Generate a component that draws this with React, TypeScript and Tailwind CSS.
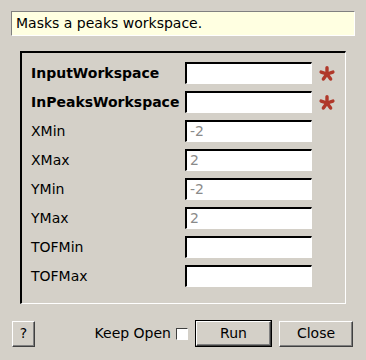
import React from 'react'

type Field = {
  name: string
  value?: string
  required?: boolean
}

const fields: Field[] = [
  { name: 'InputWorkspace', required: true },
  { name: 'InPeaksWorkspace', required: true },
  { name: 'XMin', value: '-2' },
  { name: 'XMax', value: '2' },
  { name: 'YMin', value: '-2' },
  { name: 'YMax', value: '2' },
  { name: 'TOFMin' },
  { name: 'TOFMax' },
]

// red five-armed "required" marker
function RequiredStar() {
  const arms = [-90, -18, 54, 126, 198]
  return (
    <svg width="18" height="18" viewBox="0 0 18 18" className="ml-[6px]">
      {arms.map((a) => {
        const r = (a * Math.PI) / 180
        return (
          <line
            key={a}
            x1="9"
            y1="10"
            x2={9 + 6.2 * Math.cos(r)}
            y2={10 + 6.2 * Math.sin(r)}
            stroke="#b0382a"
            strokeWidth="3.4"
            strokeLinecap="round"
          />
        )
      })}
    </svg>
  )
}

function Row({ field }: { field: Field }) {
  return (
    <div className="flex h-[22px] items-center">
      <div className={`w-[154px] text-[14px] text-black ${field.required ? 'font-bold' : ''}`}>
        {field.name}
      </div>
      {/* sunken line edit */}
      <div className="h-[22px] w-[127px] border-t-2 border-l-2 border-t-[#000] border-l-[#000] border-r border-b border-r-white border-b-white bg-white pl-[3px] text-[14px] leading-[19px] text-[#8a8a8a]">
        {field.value}
      </div>
      {field.required && <RequiredStar />}
    </div>
  )
}

function Button({ label, className = '' }: { label: string; className?: string }) {
  return (
    <div
      className={`flex items-center justify-center border border-t-white border-l-white border-r-[#404040] border-b-[#404040] bg-[#d4d0c8] text-[14px] text-black shadow-[inset_-1px_-1px_0_#808080] ${className}`}
    >
      {label}
    </div>
  )
}

export default function App() {
  return (
    <div
      className="h-[360px] w-[366px] bg-[#d4d0c8] px-[11px] pt-[11px]"
      style={{ fontFamily: '"DejaVu Sans", sans-serif' }}
    >
      {/* Description */}
      <div className="flex h-[25px] items-center border-t border-l border-t-[#808080] border-l-[#808080] border-r border-b border-r-white border-b-white bg-[#ffffe1] pl-[4px] text-[14px] text-black">
        Masks a peaks workspace.
      </div>

      {/* Properties group */}
      <div className="mx-[9px] mt-[15px] h-[253px] border-t-2 border-l-2 border-t-[#000] border-l-[#000] border-r border-b border-r-white border-b-white pl-[9px] pt-[9px]">
        <div className="flex flex-col gap-[7px]">
          {fields.map((f) => (
            <Row key={f.name} field={f} />
          ))}
        </div>
      </div>

      {/* Bottom buttons */}
      <div className="mt-[16px] flex items-center pr-[2px]">
        <Button label="?" className="ml-[1px] h-[26px] w-[23px]" />
        <div className="ml-auto flex items-center">
          <span className="text-[14px] text-black">Keep Open</span>
          <div className="ml-[5px] h-[12px] w-[12px] border-t border-l border-t-[#404040] border-l-[#404040] border-r border-b border-r-white border-b-white bg-white" />
        </div>
        <div className="ml-[7px] h-[27px] w-[77px] border border-black">
          <Button label="Run" className="h-full w-full" />
        </div>
        <Button label="Close" className="ml-[7px] h-[26px] w-[74px]" />
      </div>
    </div>
  )
}
